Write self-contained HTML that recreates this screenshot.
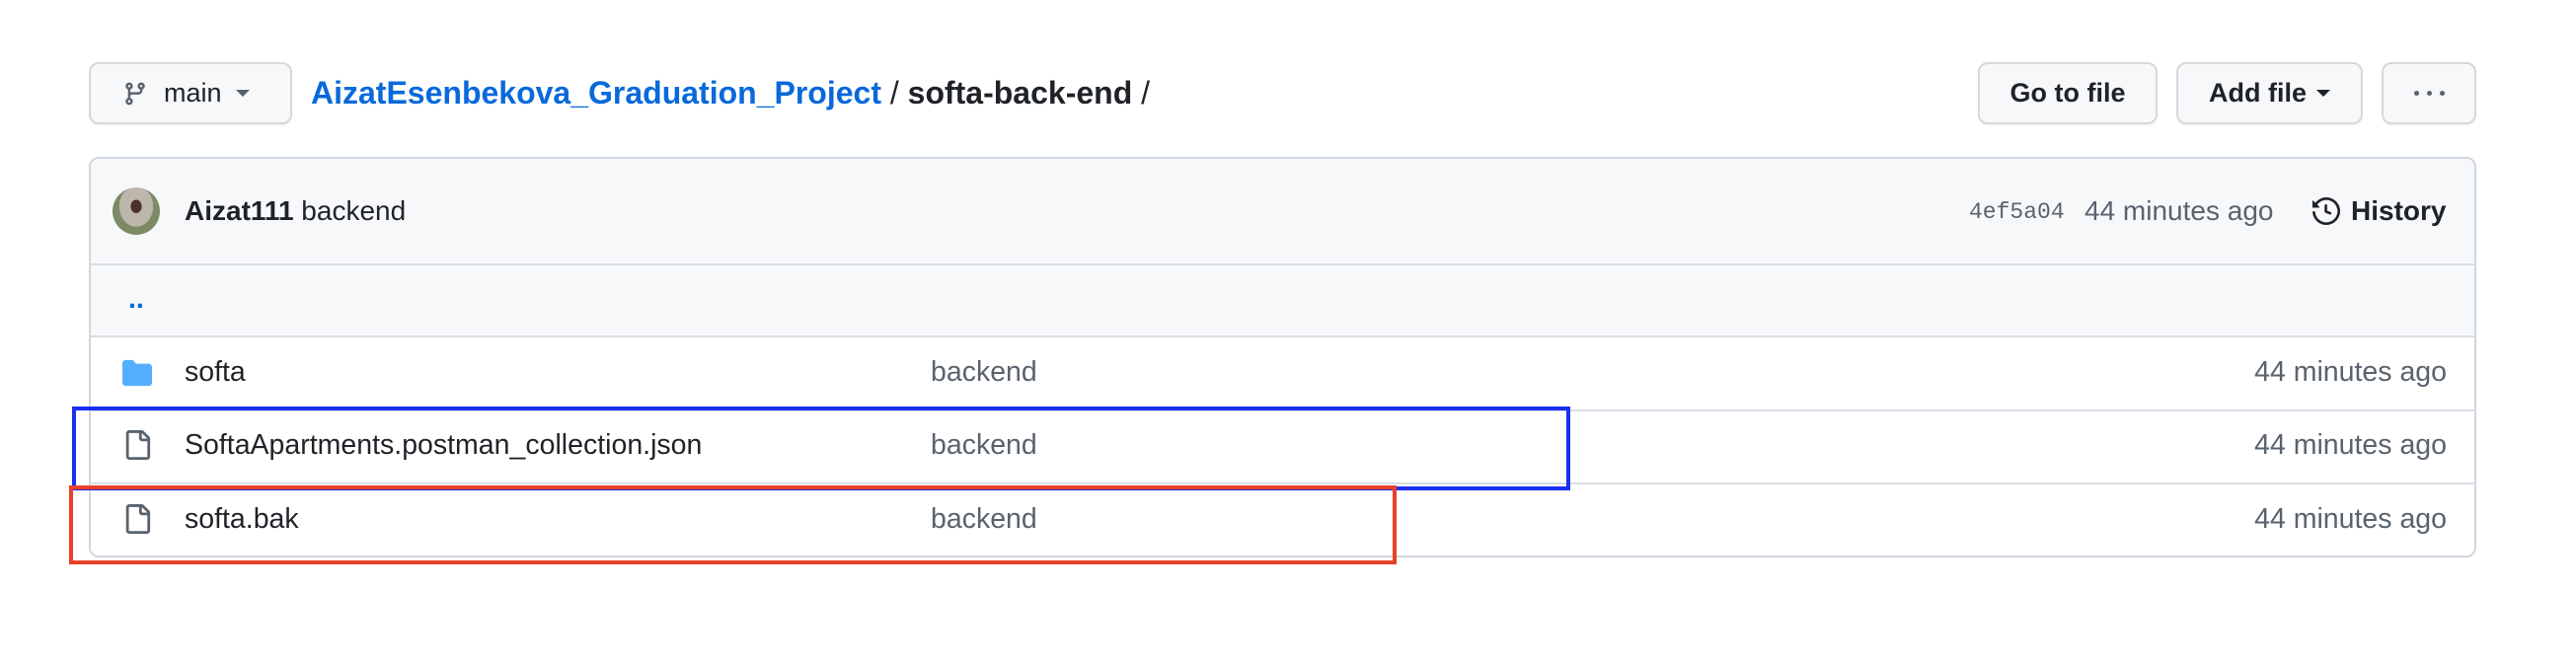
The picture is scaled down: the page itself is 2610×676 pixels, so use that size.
<!DOCTYPE html>
<html><head><meta charset="utf-8"><style>
*{box-sizing:border-box;margin:0;padding:0}
body{width:2610px;height:676px;background:#fff;font-family:"Liberation Sans",Arial,sans-serif;color:#1f2328;position:relative;overflow:hidden}
.abs{position:absolute}
.btn{position:absolute;top:63px;height:63px;border:2px solid #d5d8dc;border-radius:10px;background:#f6f8fa;font-size:27px;font-weight:600;display:flex;align-items:center;justify-content:center;box-shadow:0 2px 0 rgba(31,35,40,.04)}
.box{position:absolute;left:90px;top:159px;width:2419px;height:406px;border:2px solid #d0d7de;border-radius:10px;overflow:hidden}
.row{position:absolute;left:0;right:0;border-top:2px solid #d8dee4}
.txt{position:absolute;font-size:28.5px;line-height:32px}
.time{position:absolute;right:28px;font-size:28.5px;line-height:32px;color:#59636e}
.muted{color:#59636e}
</style></head><body>
<div class="btn" style="left:90px;width:206px;justify-content:flex-start;padding-left:32px;font-weight:400">
<svg width="26" height="32" viewBox="0 0 16 16" fill="#59636e"><path d="M9.5 3.25a2.25 2.25 0 1 1 3 2.122V6A2.5 2.5 0 0 1 10 8.5H6a1 1 0 0 0-1 1v1.128a2.251 2.251 0 1 1-1.5 0V5.372a2.25 2.25 0 1 1 1.5 0v1.836A2.493 2.493 0 0 1 6 7h4a1 1 0 0 0 1-1v-.628A2.25 2.25 0 0 1 9.5 3.25Zm-6 0a.75.75 0 1 0 1.5 0 .75.75 0 0 0-1.5 0Zm8.250-.75a.75.75 0 1 0 0 1.5.75.75 0 0 0 0-1.5ZM4.25 12a.75.75 0 1 0 0 1.5.75.75 0 0 0 0-1.5Z"/></svg>
<span style="margin-left:16px">main</span><span style="margin-left:14px;border-left:7px solid transparent;border-right:7px solid transparent;border-top:7px solid #59636e"></span></div>
<div class="abs" style="left:315px;top:75px;font-size:32px;font-weight:700;line-height:38px"><span style="color:#0969da">AizatEsenbekova_Graduation_Project</span> <span style="font-weight:400">/</span> softa-back-end <span style="font-weight:400">/</span></div>
<div class="btn" style="left:2004px;width:182px">Go to file</div>
<div class="btn" style="left:2205px;width:189px">Add file<span style="margin-left:10px;border-left:7px solid transparent;border-right:7px solid transparent;border-top:7px solid #1f2328"></span></div>
<div class="btn" style="left:2413px;width:96px;gap:8px"><i style="width:5px;height:5px;border-radius:50%;background:#59636e"></i><i style="width:5px;height:5px;border-radius:50%;background:#59636e"></i><i style="width:5px;height:5px;border-radius:50%;background:#59636e"></i></div>
<div class="box">
 <div class="abs" style="left:0;top:0;right:0;height:108px;background:#f6f8fa"></div>
 <div class="abs" style="left:22px;top:29px;width:48px;height:48px;border-radius:50%;background:radial-gradient(ellipse at 50% 40%,#4a3028 0 16%,#bdb6ab 17% 50%,#7d8a66 51%)"></div>
 <div class="txt" style="left:95px;top:37px;font-size:28px"><b>Aizat111</b> backend</div>
 <div class="txt muted" style="left:1903px;top:38px;font-family:'Liberation Mono',monospace;font-size:23px">4ef5a04</div>
 <div class="txt muted" style="left:2020px;top:37px;font-size:28px">44 minutes ago</div>
 <svg class="abs" style="left:2251px;top:39px" width="28" height="28" viewBox="0 0 16 16" fill="#1f2328"><path d="m.427 1.927 1.215 1.215a8.002 8.002 0 1 1-1.6 5.685.75.75 0 1 1 1.493-.154 6.5 6.5 0 1 0 1.18-4.458l1.358 1.358A.25.25 0 0 1 3.896 6H.25A.25.25 0 0 1 0 5.75V2.104a.25.25 0 0 1 .427-.177ZM7.75 4a.75.75 0 0 1 .75.75v2.992l2.028.812a.75.75 0 0 1-.557 1.392l-2.5-1A.751.751 0 0 1 7 8.25v-3.5A.75.75 0 0 1 7.75 4Z"/></svg>
 <div class="txt" style="left:2290px;top:37px;font-weight:700;font-size:28px">History</div>
 <div class="row" style="top:106px;height:74px;background:#f6f8fa"></div>
 <div class="txt" style="left:38px;top:126px;color:#0969da;font-weight:700">..</div>
 <div class="row" style="top:179px;height:75px"></div>
 <svg class="abs" style="left:32px;top:202px" width="30" height="30" viewBox="0 0 16 16" fill="#54aeff"><path d="M1.75 1A1.75 1.75 0 0 0 0 2.75v10.5C0 14.216.784 15 1.75 15h12.5A1.75 1.75 0 0 0 16 13.25v-8.5A1.75 1.75 0 0 0 14.25 3H7.5a.25.25 0 0 1-.2-.1l-.9-1.2C6.07 1.26 5.55 1 5 1H1.75Z"/></svg>
 <div class="txt" style="left:95px;top:200px">softa</div>
 <div class="txt muted" style="left:851px;top:200px">backend</div>
 <div class="time" style="top:200px">44 minutes ago</div>
 <div class="row" style="top:254px;height:74px"></div>
 <svg class="abs" style="left:32px;top:275px" width="30" height="30" viewBox="0 0 16 16" fill="#59636e"><path d="M2 1.75C2 .784 2.784 0 3.75 0h6.586c.464 0 .909.184 1.237.513l2.914 2.914c.329.328.513.773.513 1.237v9.586A1.75 1.75 0 0 1 13.25 16h-9.5A1.75 1.75 0 0 1 2 14.25Zm1.75-.25a.25.25 0 0 0-.25.25v12.5c0 .138.112.25.25.25h9.5a.25.25 0 0 0 .25-.25V6h-2.75A1.75 1.75 0 0 1 9 4.25V1.5Zm6.75.062V4.25c0 .138.112.25.25.25h2.688l-.011-.013-2.914-2.914-.013-.011Z"/></svg>
 <div class="txt" style="left:95px;top:274px">SoftaApartments.postman_collection.json</div>
 <div class="txt muted" style="left:851px;top:274px">backend</div>
 <div class="time" style="top:274px">44 minutes ago</div>
 <div class="row" style="top:328px;height:76px"></div>
 <svg class="abs" style="left:32px;top:350px" width="30" height="30" viewBox="0 0 16 16" fill="#59636e"><path d="M2 1.75C2 .784 2.784 0 3.75 0h6.586c.464 0 .909.184 1.237.513l2.914 2.914c.329.328.513.773.513 1.237v9.586A1.75 1.75 0 0 1 13.25 16h-9.5A1.75 1.75 0 0 1 2 14.25Zm1.75-.25a.25.25 0 0 0-.25.25v12.5c0 .138.112.25.25.25h9.5a.25.25 0 0 0 .25-.25V6h-2.75A1.75 1.75 0 0 1 9 4.25V1.5Zm6.75.062V4.25c0 .138.112.25.25.25h2.688l-.011-.013-2.914-2.914-.013-.011Z"/></svg>
 <div class="txt" style="left:95px;top:349px">softa.bak</div>
 <div class="txt muted" style="left:851px;top:349px">backend</div>
 <div class="time" style="top:349px">44 minutes ago</div>
</div>
<div class="abs" style="left:73px;top:412px;width:1518px;height:85px;border:4px solid #1a2ff0"></div>
<div class="abs" style="left:70px;top:492px;width:1345px;height:80px;border:4px solid #e8402a"></div>
</body></html>
